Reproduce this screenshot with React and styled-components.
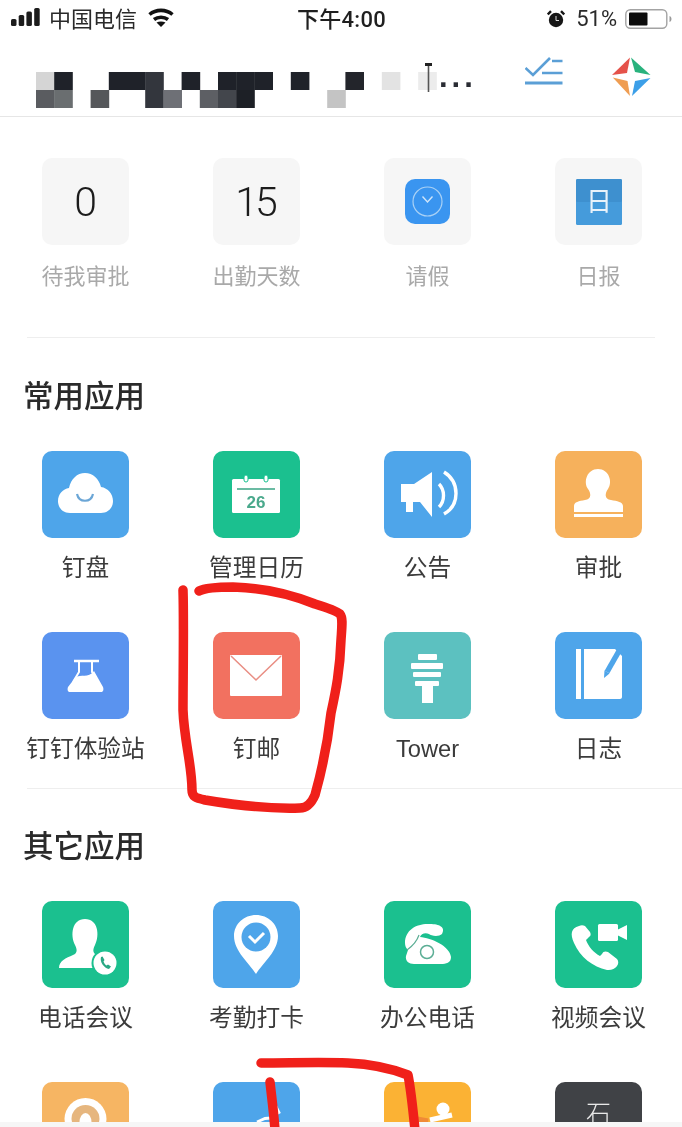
import React from "react";
import styled, { createGlobalStyle } from "styled-components";

const Global = createGlobalStyle`
  html, body { margin: 0; padding: 0; background: #fff; }
  body { font-family: "Liberation Sans", "Noto Sans CJK SC", sans-serif; }
`;

const Page = styled.div`
  position: relative;
  width: 682px;
  height: 1127px;
  overflow: hidden;
  background: #fff;
  filter: blur(0.45px);
`;
const StatusBar = styled.div`
  box-sizing: border-box;
  height: 37px;
  display: grid;
  grid-template-columns: 1fr auto 1fr;
  align-items: center;
  padding: 0 10px 3px 11px;
  font-size: 22px;
  color: #2a2a2a;
`;
const StatusLeft = styled.div`
  display: flex;
  align-items: center;
  gap: 8px;
`;
const WifiSlot = styled.span`
  display: flex;
  margin-left: 3px;
`;
const StatusRight = styled.div`
  display: flex;
  align-items: center;
  justify-content: flex-end;
  font-family: "Roboto", "Liberation Sans", sans-serif;
  gap: 8px;
  margin-top: 3px;
`;
const Percent = styled.span`
  margin-left: 3px;
`;
const Time = styled.div`
  font-family: "Roboto", "Noto Sans CJK SC", sans-serif;
  font-size: 22px;
  font-weight: 500;
  color: #1f1f1f;
  letter-spacing: 0.3px;
`;
const Nav = styled.div`
  height: 79px;
  display: flex;
  align-items: flex-start;
  padding-left: 36px;
  padding-right: 31px;
  border-bottom: 1px solid #e6e6e6;
`;
const TitleMask = styled.div`
  flex: 1;
  display: flex;
  align-items: flex-start;
  margin-top: 35px;
`;
const MosaicSvg = styled.svg`
  margin-top: -10px;
  flex: none;
`;
const Dots = styled.span`
  font-size: 31px;
  font-weight: 700;
  line-height: 32px;
  letter-spacing: 4px;
  color: #2a2c33;
  margin: -11px 0 0 0;
`;
const NavIcons = styled.div`
  display: flex;
  gap: 49px;
  margin-top: 20px;
`;
const Shortcuts = styled.div`
  display: grid;
  grid-template-columns: repeat(4, 171px);
  padding-top: 41px;
`;
const Cell = styled.div`
  display: flex;
  flex-direction: column;
  align-items: center;
`;
const Tile = styled.div`
  width: 87px;
  height: 87px;
  flex: none;
  border-radius: 10px;
  background: ${(p) => p.$bg};
  display: flex;
  align-items: center;
  justify-content: center;
  overflow: hidden;
`;
const Count = styled.span`
  font-family: "Roboto", "Liberation Sans", sans-serif;
  font-weight: 300;
  font-size: 41px;
  line-height: 40px;
  letter-spacing: -3px;
  margin-left: -3px;
  color: #1c1c1c;
`;
const MutedLabel = styled.div`
  margin-top: 16px;
  height: 32px;
  line-height: 32px;
  font-size: 22px;
  color: #a9a9a9;
  white-space: nowrap;
`;
const Label = styled.div`
  margin-top: 14px;
  height: 32px;
  line-height: 32px;
  font-size: 23.7px;
  color: #3b3b3b;
  white-space: nowrap;
`;
const Divider = styled.div`
  height: 1px;
  background: #eeeeee;
  margin: ${(p) => p.$top}px ${(p) => p.$right}px 0 27px;
`;
const Heading = styled.h2`
  margin: ${(p) => p.$top}px 0 0 23px;
  height: 40px;
  line-height: 40px;
  font-size: 30.5px;
  font-weight: 500;
  color: #2a2a2a;
`;
const Apps = styled.div`
  display: grid;
  grid-template-columns: repeat(4, 171px);
  row-gap: 48px;
  margin-top: 35px;
`;
const TabStrip = styled.div`
  position: absolute;
  left: 0;
  right: 0;
  bottom: 0;
  height: 5px;
  background: #f6f6f6;
`;
const Scribble = styled.svg`
  position: absolute;
  left: 0;
  top: 0;
`;
const StoneChar = styled.span`
  font-family: "Liberation Serif", "Noto Sans CJK SC", serif;
  font-size: 25px;
  font-weight: 300;
  color: #e8e8e8;
  margin-top: -28px;
`;

const Ico = ({ children, size = 87 }) => (
  <svg width={size} height={size} viewBox={`0 0 ${size} ${size}`}>{children}</svg>
);

const mosaic = [
  [0, 0, "#d5d5d5"], [1, 0, "#1f2229"], [4, 0, "#1f2229"], [5, 0, "#1f2229"], [6, 0, "#33363d"], [8, 0, "#1f2229"],
  [10, 0, "#1f2229"], [11, 0, "#1f2229"], [12, 0, "#1f2229"], [14, 0, "#1f2229"], [17, 0, "#23252b"], [19, 0, "#e3e3e3"], [21, 0, "#ececec"],
  [0, 1, "#5a5c60"], [1, 1, "#6a6e70"], [3, 1, "#55575a"], [6, 1, "#33363d"], [7, 1, "#6e7076"], [9, 1, "#5d5f64"],
  [10, 1, "#43464c"], [11, 1, "#1d2026"], [16, 1, "#c4c4c4"],
];

const Mosaic = () => (
  <MosaicSvg width="403" height="46" viewBox="0 -10 403 46">
    {mosaic.map(([c, r, f]) => (
      <rect key={`${c}-${r}`} x={c * 18.2} y={r * 18} width="18.6" height="18" fill={f} />
    ))}
    <rect x="389" y="-9" width="7" height="3" fill="#222" />
    <path d="M392.5 -6V20" stroke="#555" strokeWidth="1.6" />
  </MosaicSvg>
);

const Signal = () => (
  <svg width="30" height="18" viewBox="0 0 30 18" fill="#1c1c1c">
    <rect x="0" y="11" width="5.5" height="7" rx="1.6" />
    <rect x="7.7" y="7" width="5.5" height="11" rx="1.6" />
    <rect x="15.4" y="3.5" width="5.5" height="14.5" rx="1.6" />
    <rect x="23.2" y="0" width="5.5" height="18" rx="1.6" />
  </svg>
);
const Wifi = () => (
  <svg width="26" height="19" viewBox="0 0 26 19" fill="none" stroke="#111" strokeWidth="3.6">
    <path d="M1.5 6.5C8 1 18 1 24.5 6.5" />
    <path d="M6 11.5C10 8.5 16 8.5 20 11.5" />
    <path d="M13 19L8.5 14.5C11 13 15 13 17.5 14.5Z" fill="#111" stroke="none" />
  </svg>
);
const Alarm = () => (
  <svg width="18" height="18" viewBox="0 0 18 18">
    <circle cx="9" cy="10" r="7.2" fill="#161616" />
    <path d="M9 6V10.5H12" stroke="#ddd" strokeWidth="1" fill="none" />
    <path d="M0.8 4.5L4 1.2M17.2 4.5L14 1.2" stroke="#161616" strokeWidth="2.4" />
  </svg>
);
const Battery = () => (
  <svg width="47" height="20" viewBox="0 0 47 20">
    <rect x="0.8" y="0.8" width="41" height="18.4" rx="4.5" fill="none" stroke="#a3a3a3" strokeWidth="1.4" />
    <rect x="4" y="3.5" width="18.5" height="13" rx="1" fill="#0c0c0c" />
    <path d="M44.5 7V13C46 12.5 46.5 11 46.5 10S46 7.5 44.5 7Z" fill="#9a9a9a" />
  </svg>
);
const CheckList = () => (
  <svg width="38" height="30" viewBox="0 0 38 30" fill="none" stroke="#5b9fd6" strokeWidth="2.6">
    <path d="M0.5 11L8 18L25 1" />
    <path d="M27 4H37.5M17 16H37.5" />
    <path d="M0 26H37.5" strokeWidth="3" />
  </svg>
);
const Logo = () => (
  <svg width="39" height="40" viewBox="0 0 39 40">
    <path d="M18 0.5L0 18L15 16Z" fill="#e5524a" />
    <path d="M19 0.5L38.5 18L23 15Z" fill="#29b27d" />
    <path d="M0.8 20.5L18 39L15.5 24Z" fill="#ef9d52" />
    <path d="M38.5 21L20 39L23 24Z" fill="#3c9fe8" />
  </svg>
);

const Cloud = () => (
  <Ico>
    <path d="M28 62C20 62 16 56 16 50C16 43 21 38 27 37C29 28 35 22 43 22C51 22 57 28 59 36C66 37 71 43 71 50C71 57 66 62 59 62Z" fill="#fff" />
    <path d="M35 43C37 52 49 52 51 43" fill="none" stroke="#6ba6d6" strokeWidth="2.2" />
  </Ico>
);
const Calendar = () => (
  <Ico>
    <rect x="19" y="28" width="48" height="34" rx="1.5" fill="#fff" />
    <rect x="31" y="24" width="4" height="7" rx="2" fill="#fff" stroke="#17c08f" strokeWidth="1" />
    <rect x="51" y="24" width="4" height="7" rx="2" fill="#fff" stroke="#17c08f" strokeWidth="1" />
    <path d="M24 38H62" stroke="#3aa585" strokeWidth="1.6" />
    <text x="43" y="57" textAnchor="middle" fontSize="17" fontWeight="700" fill="#4aa98c" fontFamily="Liberation Sans">26</text>
  </Ico>
);
const Speaker = () => (
  <Ico>
    <path d="M17 33H30L48 21V66L36 51H29V61H22V51H17Z" fill="#fff" />
    <path d="M55 33C61 39 61 50 55 56" fill="none" stroke="#fff" strokeWidth="3.4" />
    <path d="M60 21C76 31 76 54 60 63" fill="none" stroke="#fff" strokeWidth="3.4" />
  </Ico>
);
const Stamp = () => (
  <Ico>
    <path d="M19 61V55C19 51 24 50 30 49C37 48 36 42 33 38C28 31 32 18 43 18C54 18 58 31 53 38C50 42 49 48 56 49C62 50 68 51 68 55V61Z" fill="#fff" />
    <rect x="19" y="63" width="49" height="3" fill="#fff" />
  </Ico>
);
const Flask = () => (
  <Ico>
    <path d="M32 29H57" stroke="#fff" strokeWidth="2.6" />
    <path d="M37 30V40L31 50M50 30V40L56 50" fill="none" stroke="#fff" strokeWidth="2" />
    <path d="M33 46C39 41 46 47 52 39L61 55C62 58 61 60 59 60H28C26 60 25 58 26 55Z" fill="#fff" />
  </Ico>
);
const Mail = () => (
  <Ico>
    <rect x="17" y="23" width="52" height="41" rx="1" fill="#fff" />
    <path d="M18 24L43 48L68 24" fill="none" stroke="#e98f85" strokeWidth="1.6" />
  </Ico>
);
const TowerIcon = () => (
  <Ico>
    <rect x="34" y="22" width="19" height="6" rx="1" fill="#fff" />
    <rect x="27" y="31" width="32" height="6" rx="1" fill="#fff" />
    <rect x="29" y="40" width="28" height="5" rx="1" fill="#fff" />
    <rect x="31" y="49" width="24" height="5" rx="1" fill="#fff" />
    <rect x="38" y="54" width="11" height="17" fill="#fff" />
  </Ico>
);
const Notebook = () => (
  <Ico>
    <rect x="21" y="17" width="5" height="50" fill="#fff" />
    <path d="M29 17H60L67 24V65C67 66 66 67 65 67H29Z" fill="#fff" />
    <path d="M64 19L52 40" stroke="#4ea5ea" strokeWidth="5.5" />
    <path d="M49 46L49.5 38.5L54.5 41.5Z" fill="#4ea5ea" />
  </Ico>
);
const PersonCall = () => (
  <Ico>
    <path d="M17 67C17 60 24 57 31 54C36 52 35 48 33 44C28 34 30 18 43 18C56 18 58 34 53 44C51 48 50 52 55 54C60 56 66 58 68 62V67Z" fill="#fff" />
    <circle cx="63" cy="62" r="13.5" fill="#1bc08f" />
    <circle cx="63" cy="62" r="11.5" fill="#fff" />
    <path d="M59 56C57.5 61 62 67 67 68L69 65.5L66 63.5L64.5 64.5C63 63.5 62 62 61.5 60.5L62.5 59L60.5 55.5Z" fill="#2aa884" />
  </Ico>
);
const Pin = () => (
  <Ico>
    <path d="M43 73C36 62 21 50 21 35C21 23 31 14 43 14C55 14 65 23 65 35C65 50 50 62 43 73Z" fill="#fff" />
    <circle cx="43" cy="36" r="14.5" fill="#4ea5ea" />
    <path d="M36 35L42 41L51 32" fill="none" stroke="#fff" strokeWidth="3" />
  </Ico>
);
const RotaryPhone = () => (
  <Ico>
    <path d="M21 42C21 28 34 22 46 23C55 23 62 26 58 33C55 36 47 35 45 33C41 31 37 33 36 36C47 37 66 45 67 56C67 62 62 63 57 63H30C25 63 21 60 22 55L24 49C22 47 21 45 21 42Z" fill="#fff" />
    <circle cx="43" cy="51" r="6.5" fill="#fff" stroke="#5cae95" strokeWidth="1.5" />
    <path d="M23 49C30 44 33 40 35 34" fill="none" stroke="#5cae95" strokeWidth="1.2" />
  </Ico>
);
const VideoCall = () => (
  <Ico>
    <path d="M24 25C16 27 15 33 19 42C25 56 38 66 52 69C60 70 66 63 62 58L53 51C51 50 48 50 47 53L45 55C39 52 33 45 31 39L34 36C36 35 36 33 35 31L30 25C28 24 26 24 24 25Z" fill="#fff" />
    <rect x="43" y="23" width="20" height="17" rx="1.5" fill="#fff" />
    <path d="M62 29L72 24V39L62 34Z" fill="#fff" />
  </Ico>
);
const RoundHead = () => (
  <Ico>
    <circle cx="43.5" cy="37" r="21" fill="#fff" />
    <circle cx="43.5" cy="37" r="14" fill="#e6b67e" />
    <ellipse cx="43.5" cy="40" rx="6" ry="9" fill="#fff" />
  </Ico>
);
const Peak = () => (
  <Ico>
    <path d="M60 20L66 32" stroke="#fff" strokeWidth="4" />
    <path d="M44 40L52 36.5L58 36" fill="none" stroke="#fff" strokeWidth="3" />
  </Ico>
);
const Sport = () => (
  <Ico>
    <circle cx="59" cy="27" r="6.5" fill="#fff" />
    <path d="M33 38L44 40" stroke="#f08a36" strokeWidth="7" />
    <path d="M46 38L68 33" stroke="#fff" strokeWidth="5" />
  </Ico>
);
const ClockSmall = () => (
  <svg width="45" height="45" viewBox="0 0 45 45">
    <rect width="45" height="45" rx="10" fill="#3a95f0" />
    <circle cx="22.5" cy="22.5" r="14.5" fill="none" stroke="#a9d1f5" strokeWidth="1.2" />
    <path d="M17.5 17.5L22.5 23L27.5 17.5" fill="none" stroke="#cfe5f9" strokeWidth="1.4" />
  </svg>
);
const DailySmall = () => (
  <svg width="46" height="46" viewBox="0 0 46 46">
    <rect width="46" height="46" rx="1.5" fill="#459bdb" />
    <rect width="46" height="23" rx="1.5" fill="#3e90cf" />
    <text x="23" y="32" textAnchor="middle" fontSize="26" fill="#e8f2fa" fontFamily="Noto Sans CJK SC">日</text>
  </svg>
);

const shortcuts = [
  { label: "待我审批", node: <Count>0</Count> },
  { label: "出勤天数", node: <Count>15</Count> },
  { label: "请假", node: <ClockSmall /> },
  { label: "日报", node: <DailySmall /> },
];
const common = [
  ["钉盘", "#4ea5ea", Cloud], ["管理日历", "#1bc08f", Calendar], ["公告", "#4ea5ea", Speaker], ["审批", "#f6b15c", Stamp],
  ["钉钉体验站", "#5a93ef", Flask], ["钉邮", "#f27160", Mail], ["Tower", "#5cc1c0", TowerIcon], ["日志", "#4ea5ea", Notebook],
];
const other = [
  ["电话会议", "#1bc08f", PersonCall], ["考勤打卡", "#4ea5ea", Pin], ["办公电话", "#1bc08f", RotaryPhone], ["视频会议", "#1bc08f", VideoCall],
  ["", "#f6b563", RoundHead], ["", "#4ea5ea", Peak], ["", "#fbb234", Sport], ["", "#404246", null],
];

const AppCell = ({ item: [label, bg, Icon] }) => (
  <Cell>
    <Tile $bg={bg}>{Icon ? <Icon /> : <StoneChar>石</StoneChar>}</Tile>
    <Label>{label}</Label>
  </Cell>
);

export default function App() {
  return (
    <Page>
      <Global />
      <StatusBar>
        <StatusLeft>
          <Signal />
          <span>中国电信</span>
          <WifiSlot><Wifi /></WifiSlot>
        </StatusLeft>
        <Time>下午4:00</Time>
        <StatusRight>
          <Alarm />
          <Percent>51%</Percent>
          <Battery />
        </StatusRight>
      </StatusBar>
      <Nav>
        <TitleMask>
          <Mosaic />
          <Dots>...</Dots>
        </TitleMask>
        <NavIcons>
          <CheckList />
          <Logo />
        </NavIcons>
      </Nav>
      <Shortcuts>
        {shortcuts.map((s) => (
          <Cell key={s.label}>
            <Tile $bg="#f6f6f6">{s.node}</Tile>
            <MutedLabel>{s.label}</MutedLabel>
          </Cell>
        ))}
      </Shortcuts>
      <Divider $top={44} $right={27} />
      <Heading $top={38}>常用应用</Heading>
      <Apps>
        {common.map((it) => <AppCell key={it[0]} item={it} />)}
      </Apps>
      <Divider $top={23} $right={0} />
      <Heading $top={37}>其它应用</Heading>
      <Apps>
        {other.map((it, i) => <AppCell key={i} item={it} />)}
      </Apps>
      <TabStrip />
      <Scribble width="682" height="1127" viewBox="0 0 682 1127" fill="none" stroke="#f0201a" strokeWidth="9.5" strokeLinecap="round" strokeLinejoin="round">
        <path d="M183 590C184 620 183 680 183 710C184 740 192 765 192 790C192 797 196 798 205 800C240 806 270 809 300 808C308 808 312 802 315 795C322 770 328 740 331 713C336 690 340 670 341 640C342 625 343 618 340 614C335 610 325 607 315 604C295 596 270 588 233 587C220 587 205 588 199 591" />
        <path d="M261 1063C290 1063 320 1062 348 1063C370 1064 390 1068 408 1075C411 1090 413 1110 415 1130" />
        <path d="M270 1082C272 1100 274 1115 275 1130" />
      </Scribble>
    </Page>
  );
}
